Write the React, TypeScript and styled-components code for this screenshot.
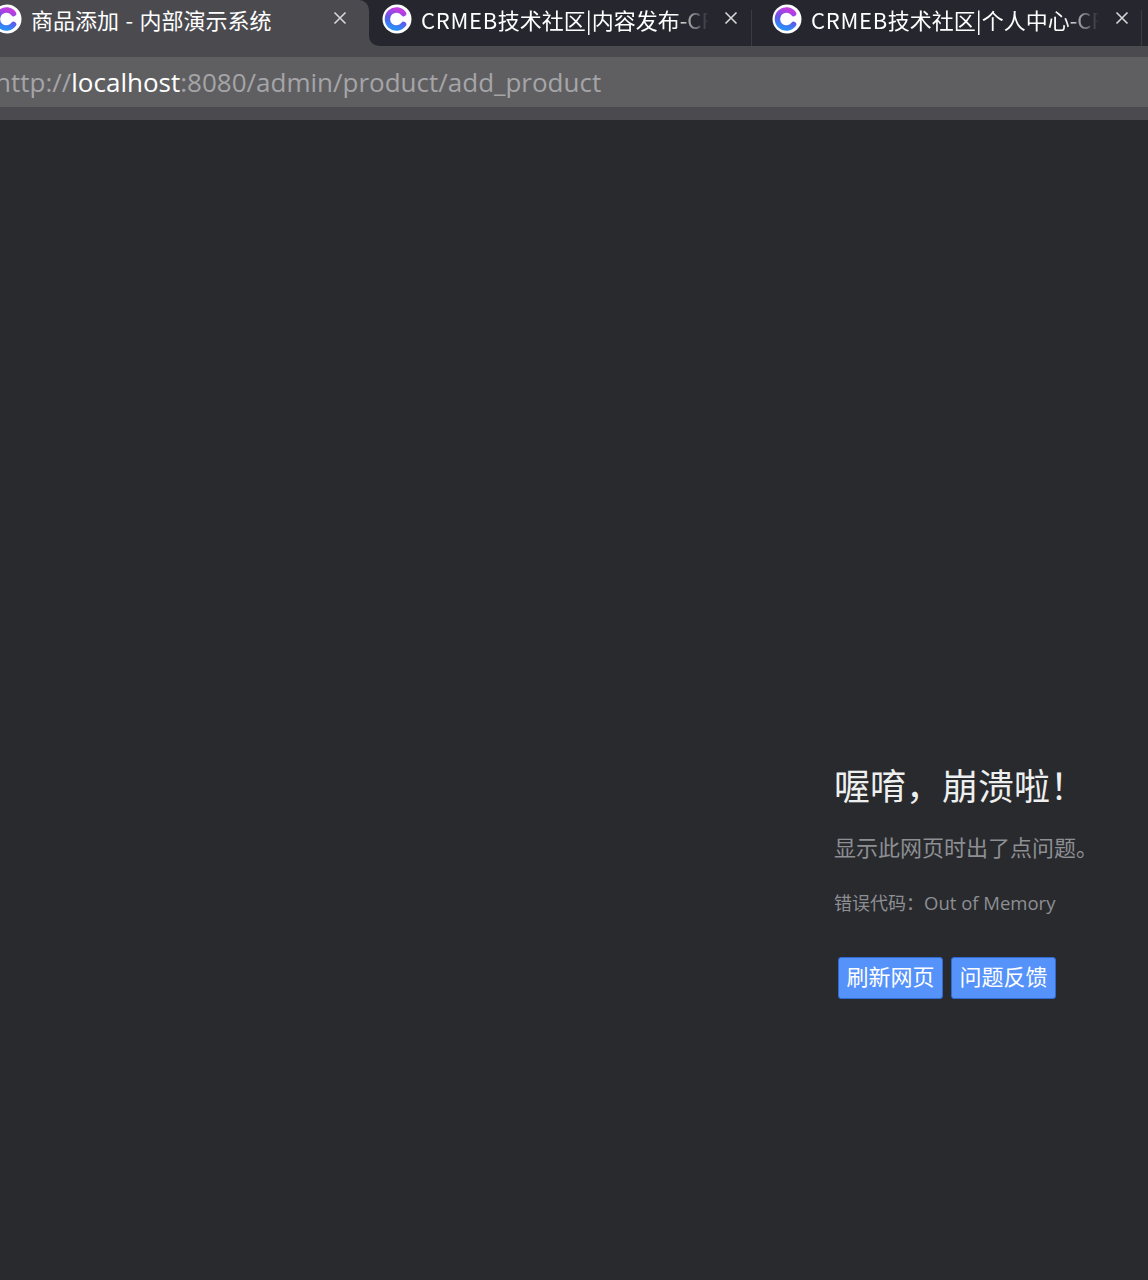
import React from "react";
import styled, { createGlobalStyle } from "styled-components";

const Global = createGlobalStyle`
  html, body { margin: 0; padding: 0; background: #292a2e; }
  body { font-family: "Noto Sans", "Noto Sans CJK SC", sans-serif; overflow: hidden; }
`;
const Frame = styled.div`
  width: 1148px; height: 1280px; display: flex; flex-direction: column; overflow: hidden; background: #292a2e;
`;
const TabStrip = styled.div`
  height: 46px; display: flex; background: #26262e; flex: none;
`;
const Tab = styled.div<{ $active?: boolean; $w: number; $pad: number }>`
  position: relative; flex: none; width: ${p => p.$w}px; height: 46px; padding-left: ${p => p.$pad}px;
  box-sizing: border-box; display: flex; align-items: flex-start;
  background: ${p => (p.$active ? "#4a4a4f" : "transparent")};
  border-top-right-radius: ${p => (p.$active ? "10px" : "0")};
`;
const Corner = styled.div`
  position: absolute; right: -10px; bottom: 0; width: 10px; height: 10px; background: #4a4a4f;
  &::after { content: ""; display: block; width: 10px; height: 10px; background: #26262e; border-bottom-left-radius: 10px; }
`;
const Divider = styled.div`
  position: absolute; right: 0; top: 10px; width: 1px; height: 36px; background: #3b3b42;
`;
const FaviconSlot = styled.span<{ $offset: number }>`
  display: flex; flex: none; margin-left: ${p => p.$offset}px;
`;
const Favicon = styled.svg`
  flex: none; width: 30px; height: 30px; margin-top: 4px;
`;
const TabTitle = styled.div<{ $fade?: boolean; $w: number }>`
  width: ${p => p.$w}px; height: 36px; margin-left: 9px; flex: none; overflow: hidden; white-space: nowrap;
  font: 400 22px/38px "Noto Sans CJK SC", "Noto Sans", sans-serif; color: #fff; word-spacing: 1.5px;
  ${p => p.$fade ? "-webkit-mask-image: linear-gradient(90deg, #000 88%, transparent 100%); mask-image: linear-gradient(90deg, #000 88%, transparent 100%);" : ""}
`;
const Latin = styled.span`
  letter-spacing: 0.7px;
`;
const Close = styled.svg<{ $right: number }>`
  position: absolute; right: ${p => p.$right}px; top: 11px; width: 14px; height: 14px; stroke: #d7d7da; stroke-width: 1.6; fill: none;
`;
const Toolbar = styled.div`
  height: 74px; flex: none; background: #4a4a4f; padding-top: 11px; box-sizing: border-box;
`;
const AddressBar = styled.div`
  height: 50px; background: #5f5f62; display: flex; align-items: center; overflow: hidden; white-space: nowrap;
  font: 400 26px/50px "Open Sans", sans-serif; color: #a5a5a8;
`;
const Scheme = styled.span`
  margin-left: -5px;
`;
const Host = styled.span`
  color: #fff;
`;
const Page = styled.main`
  flex: 1; display: flex; justify-content: flex-end; padding: 640px 14px 0 0;
`;
const ErrorBox = styled.section`
  width: 300px; box-sizing: border-box;
`;
const Title = styled.h1`
  margin: 0; font: 400 36px/48px "Noto Sans CJK SC", sans-serif; color: #eeefef;
`;
const Sub = styled.p`
  margin: 22px 0 0; font: 400 22px/32px "Noto Sans CJK SC", sans-serif; color: #8d8f93;
`;
const Code = styled.p`
  margin: 27px 0 0; font: 400 18px/28px "Open Sans", "Noto Sans CJK SC", sans-serif; color: #8d8f93;
  span { font-size: 18.5px; }
`;
const Buttons = styled.div`
  display: flex; gap: 8px; margin: 40px 0 0 4px;
`;
const Button = styled.button`
  width: 105px; height: 42px; box-sizing: border-box; padding: 0 0 6px; border: 1px solid #2f6bd3; border-radius: 3px;
  background: #5592fa; color: #fff; font: 400 22px/30px "Noto Sans CJK SC", sans-serif;
`;

const Icon = ({ id }: { id: string }) => (
  <Favicon viewBox="0 0 30 30">
    <defs>
      <linearGradient id={id} x1="0.7" y1="0" x2="0.4" y2="1">
        <stop offset="0" stopColor="#c13be0" />
        <stop offset="0.55" stopColor="#5f58ea" />
        <stop offset="1" stopColor="#2c8cf5" />
      </linearGradient>
    </defs>
    <circle cx="15" cy="15" r="14.5" fill="#fff" />
    <path d="M21.6 9.6A9 9 0 1 0 21.6 20.4" fill="none" stroke={`url(#${id})`} strokeWidth="5.4" strokeLinecap="round" />
  </Favicon>
);
const X = ({ right }: { right: number }) => (
  <Close $right={right} viewBox="0 0 14 14"><path d="M1.5 1.5 12.5 12.5M12.5 1.5 1.5 12.5" /></Close>
);

export default function App() {
  return (
    <Frame>
      <Global />
      <TabStrip>
        <Tab $active $w={369} $pad={0}>
          <FaviconSlot $offset={-8}><Icon id="a" /></FaviconSlot>
          <TabTitle $w={290}>商品添加 - 内部演示系统</TabTitle>
          <X right={22} />
          <Corner />
        </Tab>
        <Tab $w={383} $pad={13}>
          <Icon id="b" />
          <TabTitle $fade $w={288}><Latin>CRMEB</Latin>技术社区|内容发布-CRMEB</TabTitle>
          <X right={14} />
          <Divider />
        </Tab>
        <Tab $w={390} $pad={20}>
          <Icon id="c" />
          <TabTitle $fade $w={288}><Latin>CRMEB</Latin>技术社区|个人中心-CRMEB</TabTitle>
          <X right={13} />
          <Divider />
        </Tab>
      </TabStrip>
      <Toolbar>
        <AddressBar>
          <Scheme>http://</Scheme><Host>localhost</Host>:8080/admin/product/add_product
        </AddressBar>
      </Toolbar>
      <Page>
        <ErrorBox>
          <Title>喔唷，崩溃啦！</Title>
          <Sub>显示此网页时出了点问题。</Sub>
          <Code>错误代码：<span>Out of Memory</span></Code>
          <Buttons>
            <Button>刷新网页</Button>
            <Button>问题反馈</Button>
          </Buttons>
        </ErrorBox>
      </Page>
    </Frame>
  );
}
